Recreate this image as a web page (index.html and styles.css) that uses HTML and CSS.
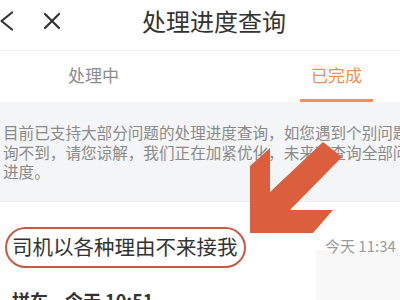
FILE: index.html
```html
<!DOCTYPE html>
<html lang="zh-CN">
<head>
<meta charset="utf-8">
<title>处理进度查询</title>
<link rel="stylesheet" href="styles.css">
</head>
<body>
<div class="page">
  <header class="header">
    <span class="icon back">
      <svg width="14" height="20" viewBox="0 0 14 20"><path d="M12 1.5 L1.5 10 L12 18.5" fill="none" stroke="#333" stroke-width="2.2" stroke-linecap="round" stroke-linejoin="round"/></svg>
    </span>
    <span class="icon close">
      <svg width="18" height="18" viewBox="0 0 18 18"><path d="M2 2 L16 16 M16 2 L2 16" fill="none" stroke="#333" stroke-width="2.2" stroke-linecap="round"/></svg>
    </span>
    <h1 class="title">处理进度查询</h1>
  </header>

  <nav class="tabs">
    <div class="tab">处理中</div>
    <div class="tab active">已完成</div>
  </nav>

  <section class="notice">
    <div class="line">目前已支持大部分问题的处理进度查询，如您遇到个别问题查</div>
    <div class="line">询不到，请您谅解，我们正在加紧优化，未来可查询全部问题的处理</div>
    <div class="line">进度。</div>
  </section>

  <section class="list">
    <div class="item">
      <span class="item-title">司机以各种理由不来接我</span>
      <span class="item-time">今天 11:34</span>
      <span class="mark-ring"></span>
    </div>
    <div class="item2">
      <span class="item2-type">拼车</span>
      <span class="item2-time">今天 10:51</span>
    </div>
  </section>

  <svg class="mark-arrow" width="400" height="300" viewBox="0 0 400 300">
    <polygon points="250,233 250,166 270,148 270,192 323,142 342,157 290,210 333,210 313,233" fill="#db5f3d"/>
  </svg>
</div>
</body>
</html>
```

FILE: styles.css
```css
* { box-sizing: border-box; }
html, body { margin: 0; padding: 0; }
body {
  width: 400px;
  height: 300px;
  overflow: hidden;
  background: #fff;
  font-family: "Noto Sans CJK SC", "Noto Sans", sans-serif;
  color: #333;
}
.page {
  position: relative;
  width: 400px;
  height: 300px;
  overflow: hidden;
}
.header {
  display: flex;
  align-items: center;
  height: 51px;
  padding-top: 4px;
  padding-bottom: 13px;
  border-bottom: 1px solid #f2f2f2;
}
.icon { display: flex; align-items: center; height: 34px; }
.back { margin-left: 0; }
.close { margin-left: 29px; }
.title {
  margin: 0 0 0 81px;
  font-size: 24px;
  font-weight: normal;
  line-height: 34px;
  color: #333;
}
.tabs {
  display: flex;
  gap: 170px;
  padding-left: 57px;
  height: 51px;
}
.tab {
  width: 73px;
  height: 51px;
  padding-top: 15px;
  font-size: 17px;
  line-height: 18px;
  text-align: center;
  color: #8c8c8c;
  border-bottom: 3px solid transparent;
}
.tab.active {
  color: #ef8f57;
  border-bottom-color: #ef9058;
}
.notice {
  background: #f4f5f7;
  height: 100px;
  padding: 21px 0 0 3px;
  border-bottom: 1px solid #ebecee;
  white-space: nowrap;
  overflow: hidden;
}
.line {
  font-size: 15.6px;
  line-height: 19.5px;
  color: #8a8a8a;
}
.list {
  background: linear-gradient(to right, #fff 316px, #f8f8f8 316px);
  background-position: 0 48px;
  background-repeat: no-repeat;
}
.item {
  position: relative;
  display: flex;
  align-items: center;
  height: 84px;
  padding: 30px 0 26px 12px;
}
.item-title {
  font-size: 20.5px;
  line-height: 28px;
  color: #333;
  white-space: nowrap;
}
.item-time {
  margin-left: auto;
  width: 75px;
  font-size: 15px;
  line-height: 20px;
  color: #9a9a9a;
  white-space: nowrap;
  overflow: hidden;
}
.mark-ring {
  position: absolute;
  left: 5px;
  top: 25px;
  width: 241px;
  height: 41px;
  border: 2px solid #c75a40;
  border-radius: 21px;
}
.item2 {
  display: flex;
  align-items: center;
  padding-left: 12px;
  font-size: 18px;
  font-weight: bold;
  line-height: 28px;
  color: #333;
}
.item2-time { margin-left: 17px; }
.mark-arrow {
  position: absolute;
  left: 0;
  top: 0;
  pointer-events: none;
}
```
